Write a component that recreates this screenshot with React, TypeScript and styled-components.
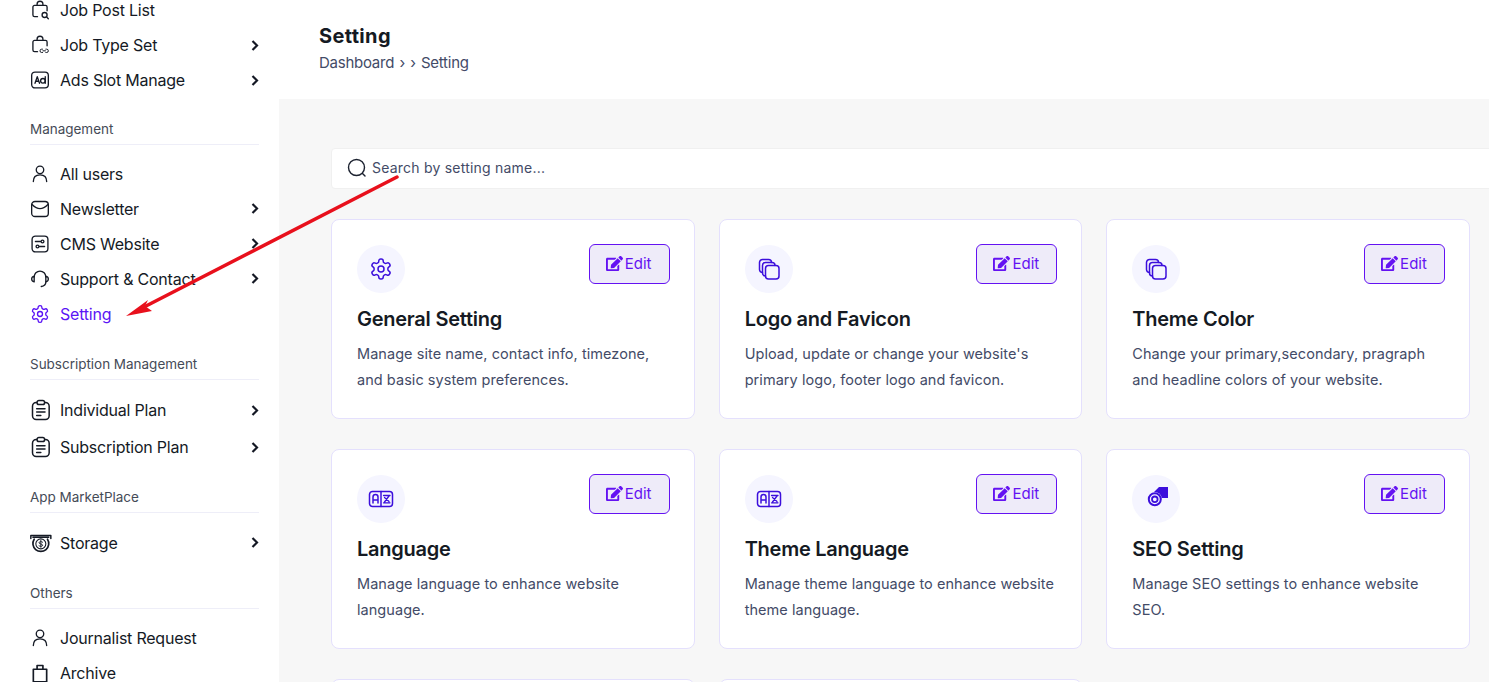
import React from "react";
import styled, { createGlobalStyle } from "styled-components";
import { FaEdit } from "react-icons/fa";

const Global = createGlobalStyle`
  html, body { margin: 0; padding: 0; height: 100%; overflow: hidden; background: #fff; }
  * { box-sizing: border-box; }
  #root { height: 100%; }
`;

const Page = styled.div`
  position: relative;
  display: flex;
  width: 1489px;
  height: 682px;
  overflow: hidden;
  font-family: Inter, "Liberation Sans", sans-serif;
  background: #fff;
`;

const Sidebar = styled.aside`
  flex: 0 0 279px;
  height: 682px;
  overflow: hidden;
  padding: 0 20px 0 30px;
  background: #fff;
`;

const SideScroll = styled.div`
  margin-top: -7.5px;
`;

const Row = styled.div<{ $tall?: boolean; $active?: boolean }>`
  display: flex;
  align-items: center;
  gap: 10px;
  height: ${(p) => (p.$tall ? 37 : 35)}px;
  color: ${(p) => (p.$active ? "#5b14f5" : "#151a25")};
  font-size: 16px;
  font-weight: 400;
  letter-spacing: -0.22px;
  white-space: nowrap;
`;

const RowIcon = styled.svg`
  flex: 0 0 20px;
  width: 20px;
  height: 20px;
  overflow: visible;
  fill: none;
  stroke: currentColor;
  stroke-width: 1.6;
  stroke-linecap: round;
  stroke-linejoin: round;
`;

const RowLabel = styled.span`
  flex: 1;
`;

const Chevron = styled.svg`
  flex: 0 0 8px;
  width: 8px;
  height: 11px;
  fill: none;
  stroke: #141824;
  stroke-width: 2.2;
`;

const Group = styled.div<{ $gap?: number }>`
  margin-top: ${(p) => p.$gap ?? 22.5}px;
`;

const GroupTitle = styled.div<{ $after?: number }>`
  height: 25px;
  line-height: 18px;
  font-size: 13.5px;
  font-weight: 400;
  letter-spacing: -0.02px;
  color: #454b57;
  border-bottom: 1px solid #eeeef8;
  margin-bottom: ${(p) => p.$after ?? 12}px;
`;

const Main = styled.main`
  flex: 1;
  min-width: 0;
  display: flex;
  flex-direction: column;
`;

const Header = styled.header`
  flex: 0 0 99px;
  padding: 24px 40px 0;
  background: #fff;
`;

const PageTitle = styled.h1`
  margin: 0;
  height: 25px;
  line-height: 25px;
  font-size: 20px;
  font-weight: 700;
  letter-spacing: 0.35px;
  color: #151a23;
`;

const Crumbs = styled.div`
  margin-top: 3px;
  line-height: 22px;
  font-size: 15px;
  font-weight: 400;
  letter-spacing: -0.25px;
  word-spacing: 1.3px;
  color: #434b67;
`;

const Content = styled.div`
  flex: 1;
  padding: 49px 19px 0 52px;
  background: #f7f7f7;
  overflow: hidden;
`;

const Search = styled.div`
  display: flex;
  align-items: center;
  gap: 5px;
  height: 41px;
  margin-right: -40px;
  padding: 0 0 2px 15px;
  background: #fff;
  border: 1px solid #f0f0f0;
  border-radius: 4px;
  color: #434b67;
  font-size: 14px;
  letter-spacing: 0.22px;
`;

const SearchIcon = styled.svg`
  flex: 0 0 20px;
  width: 20px;
  height: 20px;
  fill: none;
  stroke: #1c2230;
  stroke-width: 1.4;
  stroke-linecap: round;
`;

const Cards = styled.div`
  display: grid;
  grid-template-columns: repeat(3, 1fr);
  grid-auto-rows: 200px;
  gap: 30px 24px;
  margin-top: 30px;
`;

const Card = styled.article`
  padding: 24px 24px 24px 25px;
  background: #fff;
  border: 1px solid #e4e0fd;
  border-radius: 8px;
`;

const CardTop = styled.div`
  display: flex;
  justify-content: space-between;
  align-items: flex-start;
`;

const IconCircle = styled.div`
  display: flex;
  align-items: center;
  justify-content: center;
  width: 48px;
  height: 48px;
  margin-top: 1px;
  border-radius: 50%;
  background: #f5f5ff;
  color: #3c0fdc;
`;

const CardIcon = styled.svg`
  width: 24px;
  height: 24px;
  overflow: visible;
  fill: none;
  stroke: currentColor;
  stroke-width: 1.5;
  stroke-linecap: round;
  stroke-linejoin: round;
`;

const EditButton = styled.button`
  display: flex;
  align-items: center;
  justify-content: center;
  gap: 2px;
  width: 81px;
  height: 40px;
  padding: 0 1px 2px 0;
  background: #eeebf9;
  border: 1px solid #6412f2;
  border-radius: 6px;
  color: #6412f2;
  font-family: inherit;
  font-size: 15px;
  font-weight: 400;
`;

const CardTitle = styled.h2`
  margin: 13px 0 0;
  line-height: 26px;
  font-size: 20px;
  font-weight: 600;
  letter-spacing: -0.25px;
  color: #151a23;
`;

const CardText = styled.p`
  margin: 9px 0 0;
  line-height: 26px;
  font-size: 14.5px;
  font-weight: 400;
  letter-spacing: 0.05px;
  color: #434b67;
`;

const ArrowOverlay = styled.svg`
  position: absolute;
  left: 0;
  top: 0;
  width: 1489px;
  height: 682px;
  pointer-events: none;
`;

const BagHandle = "M8.5 6.5V5a3.5 3.5 0 0 1 7 0v1.5";
const BagBody = "M9 20H5.5A2 2 0 0 1 3.5 18V8.5a2 2 0 0 1 2-2h13a2 2 0 0 1 2 2V13";

const icons: Record<string, React.ReactNode> = {
  jobList: (
    <>
      <path d={BagHandle} />
      <path d={BagBody} />
      <circle cx="17.5" cy="18" r="3" />
      <path d="m20 20.5 2 2" />
    </>
  ),
  jobType: (
    <>
      <path d={BagHandle} />
      <path d={BagBody} />
      <path d="M15 17h-1a2 2 0 0 0 0 4h1M19 17h1a2 2 0 0 1 0 4h-1M15.500 19h3" strokeWidth="1.2" />
    </>
  ),
  ads: (
    <>
      <rect x="2" y="2.500" width="20" height="19" rx="4" />
      <path d="m6 16 2.700-8 2.700 8M7 13.500h3.500" />
      <circle cx="15.500" cy="13" r="2.800" />
      <path d="M18.300 8v8" />
    </>
  ),
  user: (
    <>
      <circle cx="12" cy="7" r="4.500" />
      <path d="M4 21c0-5 3.200-8 8-8s8 3 8 8" />
    </>
  ),
  mail: (
    <>
      <rect x="2" y="3" width="20" height="18" rx="4" />
      <path d="M2.500 6.500c3 3 6.500 5 9.500 5s6.500-2 9.500-5" />
    </>
  ),
  cms: (
    <>
      <rect x="2.500" y="2.500" width="19" height="19" rx="4" />
      <path d="M6.500 9h6M17.500 15h-6" />
      <circle cx="15" cy="9" r="1.700" />
      <circle cx="9" cy="15" r="1.700" />
    </>
  ),
  headset: (
    <>
      <path d="M5 9.500a7 7 0 0 1 14 0" />
      <path d="M5 8.500C3 9 2 10.500 2 12s1 3 3 3.500zM19 8.500c2 .5 3 2 3 3.500s-1 3-3 3.500z" />
      <path d="M19 15.500c0 3.500-2.500 5-5.500 5.500" />
    </>
  ),
  gear: (
    <>
      <path d="M12.220 2h-.44a2 2 0 0 0-2 2v.18a2 2 0 0 1-1 1.730l-.43.250a2 2 0 0 1-2 0l-.150-.080a2 2 0 0 0-2.730.730l-.220.380a2 2 0 0 0 .730 2.730l.150.100a2 2 0 0 1 1 1.720v.510a2 2 0 0 1-1 1.740l-.150.090a2 2 0 0 0-.730 2.730l.220.380a2 2 0 0 0 2.730.730l.150-.080a2 2 0 0 1 2 0l.430.250a2 2 0 0 1 1 1.730V20a2 2 0 0 0 2 2h.44a2 2 0 0 0 2-2v-.18a2 2 0 0 1 1-1.730l.430-.250a2 2 0 0 1 2 0l.150.080a2 2 0 0 0 2.730-.730l.220-.390a2 2 0 0 0-.730-2.730l-.150-.080a2 2 0 0 1-1-1.740v-.5a2 2 0 0 1 1-1.740l.150-.090a2 2 0 0 0 .730-2.730l-.220-.380a2 2 0 0 0-2.730-.730l-.150.080a2 2 0 0 1-2 0l-.430-.250a2 2 0 0 1-1-1.730V4a2 2 0 0 0-2-2z" />
      <circle cx="12" cy="12" r="3" />
    </>
  ),
  plan: (
    <>
      <rect x="3" y="3" width="20" height="20.500" rx="4.500" strokeWidth="1.800" />
      <rect x="8.500" y="0.500" width="9" height="5" rx="2.200" fill="#fff" strokeWidth="1.800" />
      <path d="M8 10.500h10M8 14.500h10M8 18.500h5" strokeWidth="1.800" />
    </>
  ),
  storage: (
    <>
      <path d="M1 6.500V3h24v3.500M3.500 5h19" strokeWidth="1.800" />
      <path d="M5 7.500a9.500 9.500 0 1 0 16 0" strokeWidth="2" />
      <circle cx="13" cy="13" r="6" strokeWidth="1.300" />
      <path d="M15.200 11c-1-1-4.400-1-4.400.8s4.400 1 4.400 2.800-3.400 1.700-4.400.8M13 8.800v8.400" strokeWidth="1.100" />
    </>
  ),
  archive: (
    <>
      <path d="M4 7.500h16v15H4z" strokeWidth="2" />
      <path d="M8.500 7.500V3h7v4.500" strokeWidth="2" />
    </>
  ),
};

const cardIcons: Record<string, React.ReactNode> = {
  gear: icons.gear,
  copies: (
    <>
      <rect x="8.500" y="8.500" width="13.500" height="13.500" rx="3" />
      <path d="M8.500 19a3 3 0 0 1-3-3V8.500a3 3 0 0 1 3-3H15a3 3 0 0 1 3 3" />
      <path d="M5.500 15.500a3 3 0 0 1-3-3v-7a3 3 0 0 1 3-3h6a3 3 0 0 1 3 3" />
    </>
  ),
  lang: (
    <>
      <rect x="0.500" y="4.500" width="23" height="15" rx="3" />
      <path d="M12 4.500v15" />
      <path d="M4 16V10a2.500 2.500 0 0 1 5 0v6M4 13h5" />
      <path d="M14.500 8.500h6.500M20 9l-4.500 6M15.500 10.500l4.500 4M14.500 15.800h6.500" strokeWidth="1.300" />
    </>
  ),
  seo: (
    <>
      <path d="M15 0H24V11H18A8 8 0 0 0 10 5Z" fill="currentColor" stroke="none" />
      <circle cx="10.800" cy="12.300" r="6" strokeWidth="2" fill="#f5f5ff" />
      <circle cx="10.800" cy="12.300" r="2.800" strokeWidth="1.800" />
    </>
  ),
};

const Item = ({
  icon,
  label,
  more,
  tall,
  active,
}: {
  icon: string;
  label: string;
  more?: boolean;
  tall?: boolean;
  active?: boolean;
}) => (
  <Row $tall={tall} $active={active}>
    <RowIcon viewBox="0 0 24 24">{icons[icon]}</RowIcon>
    <RowLabel>{label}</RowLabel>
    {more && (
      <Chevron viewBox="0 0 8 11">
        <path d="M1.500 1 6 5.500 1.500 10" />
      </Chevron>
    )}
  </Row>
);

const cards = [
  { icon: "gear", title: "General Setting", text: "Manage site name, contact info, timezone, and basic system preferences." },
  { icon: "copies", title: "Logo and Favicon", text: "Upload, update or change your website's primary logo, footer logo and favicon." },
  { icon: "copies", title: "Theme Color", text: "Change your primary,secondary, pragraph and headline colors of your website." },
  { icon: "lang", title: "Language", text: "Manage language to enhance website language." },
  { icon: "lang", title: "Theme Language", text: "Manage theme language to enhance website theme language." },
  { icon: "seo", title: "SEO Setting", text: "Manage SEO settings to enhance website SEO." },
];

export default function App() {
  return (
    <Page>
      <Global />
      <Sidebar>
        <SideScroll>
          <Item icon="jobList" label="Job Post List" />
          <Item icon="jobType" label="Job Type Set" more />
          <Item icon="ads" label="Ads Slot Manage" more />
          <Group>
            <GroupTitle $after={11}>Management</GroupTitle>
            <Item icon="user" label="All users" />
            <Item icon="mail" label="Newsletter" more />
            <Item icon="cms" label="CMS Website" more />
            <Item icon="headset" label="Support & Contact" more />
            <Item icon="gear" label="Setting" active />
          </Group>
          <Group $gap={23.5}>
            <GroupTitle>Subscription Management</GroupTitle>
            <Item icon="plan" label="Individual Plan" more tall />
            <Item icon="plan" label="Subscription Plan" more tall />
          </Group>
          <Group>
            <GroupTitle $after={11}>App MarketPlace</GroupTitle>
            <Item icon="storage" label="Storage" more tall />
          </Group>
          <Group>
            <GroupTitle>Others</GroupTitle>
            <Item icon="user" label="Journalist Request" />
            <Item icon="archive" label="Archive" />
          </Group>
        </SideScroll>
      </Sidebar>
      <Main>
        <Header>
          <PageTitle>Setting</PageTitle>
          <Crumbs>Dashboard › › Setting</Crumbs>
        </Header>
        <Content>
          <Search>
            <SearchIcon viewBox="0 0 20 20">
              <circle cx="9.500" cy="9.500" r="8" />
              <path d="m15.500 15.500 2.500 2.500" />
            </SearchIcon>
            Search by setting name...
          </Search>
          <Cards>
            {cards.map((c) => (
              <Card key={c.title}>
                <CardTop>
                  <IconCircle>
                    <CardIcon viewBox="0 0 24 24">{cardIcons[c.icon]}</CardIcon>
                  </IconCircle>
                  <EditButton>
                    <FaEdit size={17} />
                    Edit
                  </EditButton>
                </CardTop>
                <CardTitle>{c.title}</CardTitle>
                <CardText>{c.text}</CardText>
              </Card>
            ))}
            <Card />
            <Card />
          </Cards>
        </Content>
      </Main>
      <ArrowOverlay viewBox="0 0 1489 682">
        <path d="M397 177 146 306" stroke="#e8101c" strokeWidth="3.500" strokeLinecap="round" fill="none" />
        <path d="M126 316 148 300 145 306 152 311z" fill="#e8101c" />
      </ArrowOverlay>
    </Page>
  );
}
